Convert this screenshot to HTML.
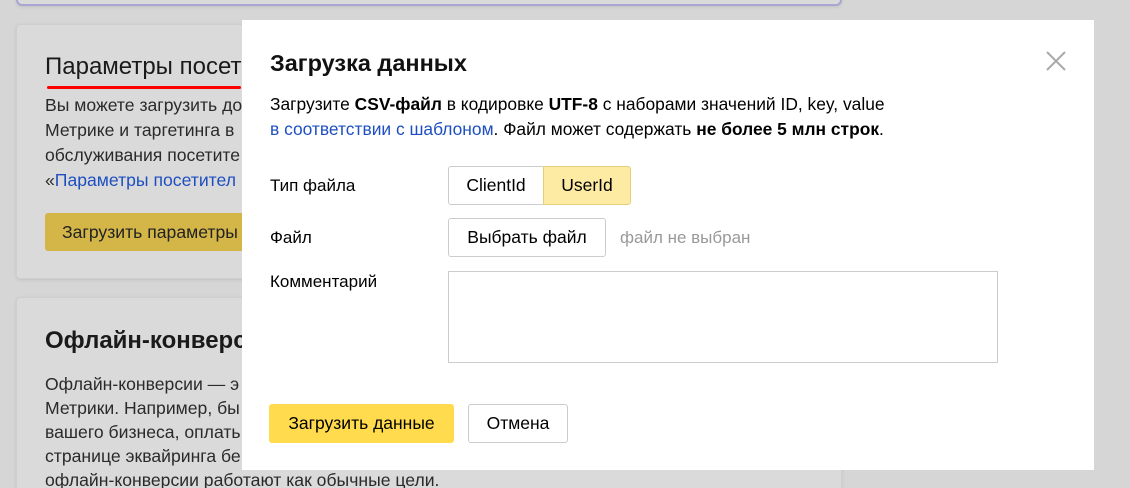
<!DOCTYPE html>
<html><head><meta charset="utf-8"><style>
*{box-sizing:border-box;margin:0;padding:0}
html,body{width:1130px;height:488px;overflow:hidden}
body{background:#d6d6d6;font-family:"Liberation Sans",sans-serif;position:relative;color:#000}
.card{position:absolute;left:16px;width:826px;background:#dadada;border:1px solid #cfcfcf;border-radius:4px;box-shadow:0 1px 3px rgba(0,0,0,.1);overflow:hidden}
.top{top:-10px;height:16px;border:2px solid #a9a6d4;border-radius:6px}
.c1{top:24px;height:255px}
.c2{top:297px;height:191px;border-bottom:none;border-radius:4px 4px 0 0}
h2{position:absolute;left:28px;font-size:24px;font-weight:normal;color:#1a1a1a;white-space:nowrap}
.p{position:absolute;left:28px;font-size:17.6px;line-height:25px;color:#2a2a2a;white-space:nowrap}
a{color:#1e4fc0;text-decoration:none}
.modal{position:absolute;left:242px;top:20px;width:852px;height:450px;background:#fff}
.m{position:absolute;font-size:17px;white-space:nowrap}
.btn{position:absolute;border:1px solid #ccc;border-radius:3px;background:#fff;font-size:17.5px;display:flex;align-items:center;justify-content:center}
</style></head><body>
<div class="card top"></div>
<div class="card c1">
<h2 style="top:28px">Параметры посетителей</h2>
<div style="position:absolute;left:30px;top:61px;width:194px;height:3px;background:#f00;border-radius:2px"></div>
<div class="p" style="top:68px">Вы можете загрузить до<br>Метрике и таргетинга в<br>обслуживания посетите<br>«<a>Параметры посетител</a></div>
<div style="position:absolute;left:28px;top:188px;width:220px;height:38px;background:#d4b648;border-radius:3px;font-size:17.6px;line-height:38px;padding-left:17px;color:#222;white-space:nowrap">Загрузить параметры</div>
</div>
<div class="card c2">
<h2 style="top:29px;font-weight:bold;font-size:24px">Офлайн-конверсии</h2>
<div class="p" style="top:74px;line-height:24px">Офлайн-конверсии — э<br>Метрики. Например, бы<br>вашего бизнеса, оплать<br>странице эквайринга бе<br>офлайн-конверсии работают как обычные цели.</div>
</div>
<div class="modal">
<div class="m" style="left:28px;top:30px;font-size:23.5px;font-weight:bold;color:#111">Загрузка данных</div>
<svg style="position:absolute;left:804px;top:31px" width="20" height="20"><path d="M1 1L19 19M19 1L1 19" stroke="#aaa" stroke-width="2"/></svg>
<div class="m" style="left:28px;top:72px;line-height:25px;font-size:17.4px">Загрузите <b>CSV-файл</b> в кодировке <b>UTF-8</b> с наборами значений ID, key, value<br><a>в соответствии с шаблоном</a>. Файл может содержать <b>не более 5 млн строк</b>.</div>
<div class="m" style="left:28px;top:156px">Тип файла</div>
<div class="btn" style="left:206px;top:146px;width:96px;height:39px;border-radius:3px 0 0 3px">ClientId</div>
<div class="btn" style="left:301px;top:146px;width:88px;height:39px;background:#feeba3;border-color:#e6cf7a;border-radius:0 3px 3px 0">UserId</div>
<div class="m" style="left:28px;top:208px">Файл</div>
<div class="btn" style="left:206px;top:198px;width:158px;height:39px">Выбрать файл</div>
<div class="m" style="left:378px;top:208px;color:#999">файл не выбран</div>
<div class="m" style="left:28px;top:252px">Комментарий</div>
<div style="position:absolute;left:206px;top:251px;width:550px;height:92px;border:1px solid #ccc"></div>
<div class="btn" style="left:27px;top:384px;width:185px;height:39px;background:#ffdb4d;border-color:#ffdb4d">Загрузить данные</div>
<div class="btn" style="left:226px;top:384px;width:100px;height:39px">Отмена</div>
</div>
</body></html>
